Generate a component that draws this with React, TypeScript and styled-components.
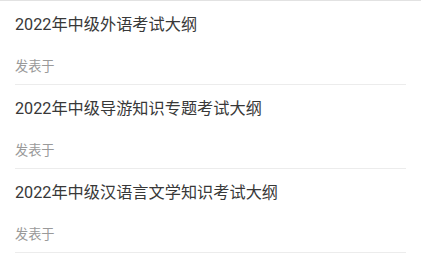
import styled, { createGlobalStyle } from "styled-components";

const GlobalStyle = createGlobalStyle`
    html, body {
        margin: 0;
        padding: 0;
        background: #ffffff;
    }
    body {
        font-family: Roboto, "Noto Sans CJK SC", sans-serif;
    }
`;

const List = styled.div`
    display: flex;
    flex-direction: column;
    border-top: 1px solid #e2e2e2;
    background: #ffffff;
`;

const Item = styled.div`
    display: flex;
    flex-direction: column;
    height: 84px;
    margin: 0 15px;
    padding-top: 12px;
    box-sizing: border-box;
    border-bottom: 1px solid #ececec;
`;

const ItemTitle = styled.div`
    font-size: 16.2px;
    line-height: 24px;
    color: #383838;
`;

const ItemMeta = styled.div`
    margin-top: 20px;
    font-size: 13.2px;
    line-height: 20px;
    color: #9a9a9a;
`;

const articles = [
    { id: 1, title: "2022年中级外语考试大纲" },
    { id: 2, title: "2022年中级导游知识专题考试大纲" },
    { id: 3, title: "2022年中级汉语言文学知识考试大纲" },
];

export default function App() {
    return (
        <>
            <GlobalStyle />
            <List>
                {articles.map(a => (
                    <Item key={a.id}>
                        <ItemTitle>{a.title}</ItemTitle>
                        <ItemMeta>发表于</ItemMeta>
                    </Item>
                ))}
            </List>
        </>
    );
}
